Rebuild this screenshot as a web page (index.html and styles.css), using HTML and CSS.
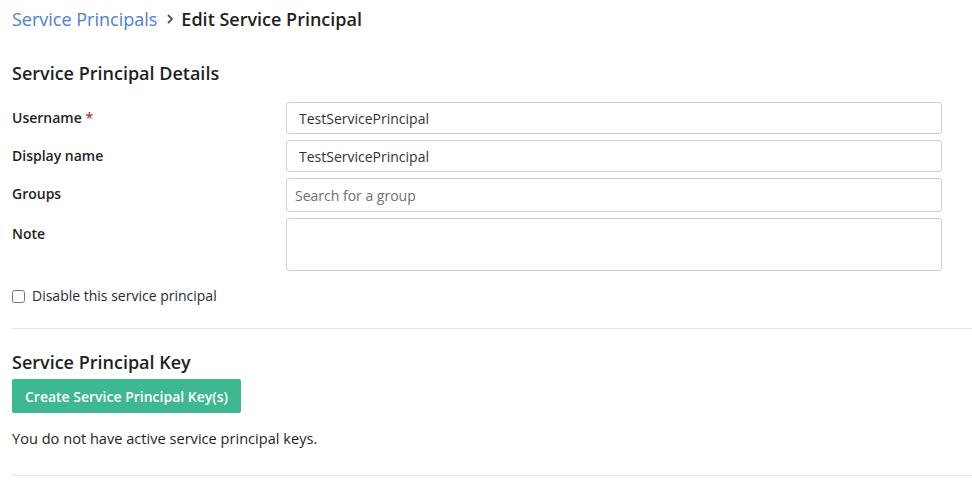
FILE: index.html
```html
<!DOCTYPE html>
<html>
<head>
<meta charset="utf-8">
<link rel="stylesheet" href="styles.css">
</head>
<body>
<div class="page">
  <nav class="crumbs">
    <a class="crumb-link" href="#">Service Principals</a>
    <svg class="chev" width="10" height="12" viewBox="0 0 10 12"><path d="M3 2l4 4-4 4" fill="none" stroke="#555" stroke-width="1.8"/></svg>
    <span class="crumb-current">Edit Service Principal</span>
  </nav>

  <h2 class="section-title details-title">Service Principal Details</h2>

  <div class="form">
    <label class="lbl">Username <span class="req">*</span></label>
    <input class="field" type="text" value="TestServicePrincipal">
    <label class="lbl">Display name</label>
    <input class="field" type="text" value="TestServicePrincipal">
    <label class="lbl">Groups</label>
    <input class="field field-search" type="text" placeholder="Search for a group">
    <label class="lbl lbl-note">Note</label>
    <textarea class="field area"></textarea>
  </div>

  <label class="check-row"><input type="checkbox" class="check"> <span>Disable this service principal</span></label>

  <hr class="divider">

  <h2 class="section-title key-title">Service Principal Key</h2>
  <button class="btn">Create Service Principal Key(s)</button>
  <p class="empty">You do not have active service principal keys.</p>

  <hr class="divider divider-bottom">
</div>
</body>
</html>
```

FILE: styles.css
```css
html, body {
  margin: 0;
  padding: 0;
  background: #fff;
}
body {
  font-family: "Open Sans", "Liberation Sans", sans-serif;
  color: #1f1f23;
  font-size: 14px;
}
.page {
  padding: 0 0 0 12px;
}
.crumbs {
  display: flex;
  align-items: center;
  height: 38px;
  font-size: 18px;
}
.crumb-link {
  color: #4a7fd0;
  text-decoration: none;
}
.chev {
  margin: 0 6px 0 8px;
}
.crumb-current {
  font-weight: 600;
  color: #1f1f23;
}
.section-title {
  margin: 0;
  font-weight: 600;
  font-size: 18px;
  line-height: 24px;
}
.details-title {
  margin-top: 23px;
}
.form {
  display: grid;
  grid-template-columns: 274px 656px;
  row-gap: 6px;
  margin-top: 17px;
}
.lbl {
  font-weight: 600;
  font-size: 14px;
  line-height: 20px;
  padding-top: 6px;
}
.req {
  color: #b03a3a;
}
.field {
  box-sizing: border-box;
  height: 32px;
  border: 1px solid #cfcfcf;
  border-radius: 3px;
  padding: 0 12px;
  font-family: "Open Sans", "Liberation Sans", sans-serif;
  font-size: 14px;
  color: #333;
  outline: none;
}
.field-search {
  height: 34px;
  padding: 0 8px;
}
.field-search::placeholder {
  color: #707070;
}
.area {
  height: 53px;
  resize: none;
}
.check-row {
  display: flex;
  align-items: center;
  margin-top: 15px;
  font-size: 14px;
  color: #2a2a33;
  line-height: 20px;
}
.check {
  margin: 0 7px 0 0;
  width: 13px;
  height: 13px;
}
.divider {
  border: 0;
  border-top: 1px solid #e6e6e6;
  margin: 22px 0 0 0;
}
.key-title {
  margin-top: 21px;
}
.btn {
  display: block;
  margin-top: 5px;
  height: 34px;
  width: 229px;
  border: 0;
  border-radius: 2px;
  background: #3db891;
  color: #fff;
  font-family: "Open Sans", "Liberation Sans", sans-serif;
  font-weight: 600;
  font-size: 14px;
  padding: 0;
}
.empty {
  margin: 15px 0 0;
  font-size: 14.6px;
  line-height: 20px;
}
.divider-bottom {
  margin-top: 27px;
}
```
